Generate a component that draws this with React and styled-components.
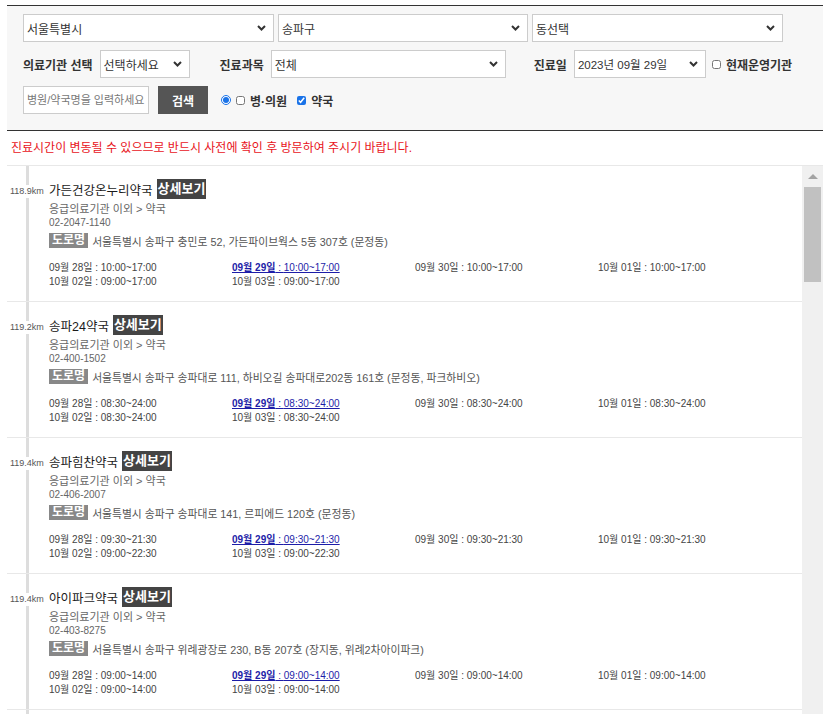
import styled, { createGlobalStyle } from 'styled-components'

const GlobalStyle = createGlobalStyle`
  html, body {
    margin: 0;
    padding: 0;
    background: #fff;
    overflow: hidden;
  }
  body {
    font-family: "Liberation Sans", "Noto Sans CJK KR", sans-serif;
    color: #333;
  }
  * { box-sizing: border-box; }
`

const DATES = ['09월 28일', '09월 29일', '09월 30일', '10월 01일', '10월 02일', '10월 03일']
const TODAY = 1

const PHARMACIES = [
  {
    id: 1,
    dist: '118.9km',
    name: '가든건강온누리약국',
    tel: '02-2047-1140',
    addr: '서울특별시 송파구 충민로 52, 가든파이브웍스 5동 307호 (문정동)',
    times: ['10:00~17:00', '10:00~17:00', '10:00~17:00', '10:00~17:00', '09:00~17:00', '09:00~17:00'],
  },
  {
    id: 2,
    dist: '119.2km',
    name: '송파24약국',
    tel: '02-400-1502',
    addr: '서울특별시 송파구 송파대로 111, 하비오길 송파대로202동 161호 (문정동, 파크하비오)',
    times: ['08:30~24:00', '08:30~24:00', '08:30~24:00', '08:30~24:00', '08:30~24:00', '08:30~24:00'],
  },
  {
    id: 3,
    dist: '119.4km',
    name: '송파힘찬약국',
    tel: '02-406-2007',
    addr: '서울특별시 송파구 송파대로 141, 르피에드 120호 (문정동)',
    times: ['09:30~21:30', '09:30~21:30', '09:30~21:30', '09:30~21:30', '09:00~22:30', '09:00~22:30'],
  },
  {
    id: 4,
    dist: '119.4km',
    name: '아이파크약국',
    tel: '02-403-8275',
    addr: '서울특별시 송파구 위례광장로 230, B동 207호 (장지동, 위례2차아이파크)',
    times: ['09:00~14:00', '09:00~14:00', '09:00~14:00', '09:00~14:00', '09:00~14:00', '09:00~14:00'],
  },
]

function Chevron() {
  return (
    <svg width="9" height="6" viewBox="0 0 9 6">
      <path d="M1 1 L4.5 4.5 L8 1" fill="none" stroke="#333" strokeWidth="2" />
    </svg>
  )
}

function Select({ width, value, small }) {
  return (
    <SelectBox $width={width} $small={small}>
      <span>{value}</span>
      <Chevron />
    </SelectBox>
  )
}

function App() {
  return (
    <Page>
      <GlobalStyle />
      <FilterBox>
        <FilterRow $gap={4}>
          <Select width={251} value="서울특별시" />
          <Select width={250} value="송파구" />
          <Select width={251} value="동선택" />
        </FilterRow>
        <FilterRow>
          <Label>의료기관 선택</Label>
          <Select width={90} value="선택하세요" />
          <Label $space={23}>진료과목</Label>
          <Select width={235} value="전체" />
          <Label $space={21}>진료일</Label>
          <Select width={132} value="2023년 09월 29일" small />
          <CheckGroup>
            <Check type="checkbox" readOnly />
            <Label>현재운영기관</Label>
          </CheckGroup>
        </FilterRow>
        <FilterRow>
          <SearchInput placeholder="병원/약국명을 입력하세요" />
          <SearchButton>검색</SearchButton>
          <CheckGroup $space={6}>
            <Radio type="radio" checked readOnly />
            <Check type="checkbox" readOnly />
            <Label>병·의원</Label>
            <Check type="checkbox" checked readOnly $space={5} />
            <Label>약국</Label>
          </CheckGroup>
        </FilterRow>
      </FilterBox>

      <Notice>진료시간이 변동될 수 있으므로 반드시 사전에 확인 후 방문하여 주시기 바랍니다.</Notice>

      <ResultList>
        <Timeline>
          {PHARMACIES.map((p) => (
            <Item key={p.id}>
              <Distance>
                <span>{p.dist}</span>
              </Distance>
              <Info>
                <TitleRow>
                  <Name>{p.name}</Name>
                  <DetailBadge>상세보기</DetailBadge>
                </TitleRow>
                <Category>응급의료기관 이외 &gt; 약국</Category>
                <Phone>{p.tel}</Phone>
                <AddressRow>
                  <RoadBadge>도로명</RoadBadge>
                  <Address>{p.addr}</Address>
                </AddressRow>
                <Schedule>
                  {DATES.map((d, i) => (
                    <TimeCell key={d} $today={i === TODAY}>
                      <b>{d}</b> : {p.times[i]}
                    </TimeCell>
                  ))}
                </Schedule>
              </Info>
            </Item>
          ))}
          <Item />
        </Timeline>
        <ScrollTrack>
          <ScrollArrow />
          <ScrollThumb />
        </ScrollTrack>
      </ResultList>
    </Page>
  )
}

const Page = styled.div`
  padding: 5px 7px 0;
`

const FilterBox = styled.div`
  display: flex;
  flex-direction: column;
  gap: 8px;
  background: #f7f7f7;
  border-top: 1px solid #333;
  border-bottom: 1px solid #333;
  padding: 8px 16px 16px;
`

const FilterRow = styled.div`
  display: flex;
  align-items: center;
  gap: ${({ $gap }) => $gap || 7}px;
  height: 28px;
`

const SelectBox = styled.div`
  width: ${({ $width }) => $width}px;
  height: 28px;
  flex: none;
  display: flex;
  align-items: center;
  justify-content: space-between;
  padding: 0 7px 0 3px;
  background: #fff;
  border: 1px solid #ccc;
  font-size: ${({ $small }) => ($small ? 11.5 : 12)}px;
  color: #333;
  white-space: nowrap;
  overflow: hidden;

  svg { flex: none; }
`

const Label = styled.label`
  margin-left: ${({ $space }) => $space || 0}px;
  font-size: 12px;
  font-weight: bold;
  color: #333;
  white-space: nowrap;
`

const CheckGroup = styled.div`
  display: flex;
  align-items: center;
  gap: 5px;
  margin-left: ${({ $space }) => $space || -1}px;
`

const Check = styled.input`
  width: 9px;
  height: 9px;
  margin: 0 0 0 ${({ $space }) => $space || 0}px;
  accent-color: #1a73e8;
`

const Radio = styled.input`
  width: 10px;
  height: 10px;
  margin: 0;
  accent-color: #1a73e8;
`

const SearchInput = styled.input`
  width: 126px;
  height: 28px;
  padding: 0 3px;
  border: 1px solid #ccc;
  background: #fff;
  font-family: inherit;
  font-size: 11px;
  color: #333;
  outline: none;

  &::placeholder { color: #777; }
`

const SearchButton = styled.button`
  width: 50px;
  height: 28px;
  margin-left: 2px;
  border: none;
  background: #555;
  color: #fff;
  font-family: inherit;
  font-size: 12px;
  font-weight: bold;
`

const Notice = styled.p`
  margin: 0;
  height: 35px;
  line-height: 34px;
  padding-left: 4px;
  font-size: 12px;
  color: #e8131b;
  border-bottom: 1px solid #e8e8e8;
`

const ResultList = styled.div`
  display: flex;
  height: 548px;
  overflow: hidden;
`

const Timeline = styled.div`
  flex: 1;
  min-width: 0;
  background: linear-gradient(#ddd, #ddd) no-repeat 19px 0 / 3px 100%;
`

const ScrollTrack = styled.div`
  width: 21px;
  flex: none;
  display: flex;
  flex-direction: column;
  align-items: center;
  background: #f0f0f0;
`

const ScrollArrow = styled.div`
  height: 21px;
  width: 100%;
  display: flex;
  align-items: center;
  justify-content: center;

  &::before {
    content: '';
    border-left: 5px solid transparent;
    border-right: 5px solid transparent;
    border-bottom: 5px solid #a3a3a3;
  }
`

const ScrollThumb = styled.div`
  width: 17px;
  height: 95px;
  background: #c1c1c1;
`

const Item = styled.div`
  display: flex;
  padding: 13px 0 12px 3px;
  border-bottom: 1px solid #e8e8e8;
`

const Distance = styled.div`
  width: 38px;
  flex: none;
  padding-top: 1px;

  span {
    display: inline-block;
    background: #fff;
    font-size: 9px;
    line-height: 13px;
    color: #555;
  }
`

const Info = styled.div`
  flex: 1;
  display: flex;
  flex-direction: column;
  padding-left: 1px;
`

const TitleRow = styled.div`
  display: flex;
  align-items: center;
  gap: 4px;
  height: 20px;
`

const Name = styled.span`
  font-size: 12.5px;
  color: #1a1a1a;
`

const DetailBadge = styled.span`
  background: #444;
  color: #fff;
  font-size: 13px;
  font-weight: bold;
  line-height: 20px;
  padding: 0 1px;
`

const Category = styled.div`
  margin-top: 3px;
  font-size: 11px;
  line-height: 14px;
  color: #666;
`

const Phone = styled.div`
  font-size: 10px;
  line-height: 14px;
  color: #666;
`

const AddressRow = styled.div`
  display: flex;
  align-items: center;
  gap: 4px;
  margin-top: 3px;
  height: 15px;
`

const RoadBadge = styled.span`
  background: #888;
  color: #fff;
  font-size: 12px;
  font-weight: bold;
  line-height: 15px;
  padding: 0 3px;
`

const Address = styled.span`
  font-size: 10.8px;
  color: #555;
  white-space: nowrap;
`

const Schedule = styled.div`
  display: grid;
  grid-template-columns: repeat(4, 183px);
  margin-top: 13px;
`

const TimeCell = styled.div`
  font-size: 10px;
  line-height: 14px;
  white-space: nowrap;
  color: ${({ $today }) => ($today ? '#1d1da8' : '#444')};
  text-decoration: ${({ $today }) => ($today ? 'underline' : 'none')};

  b {
    font-weight: ${({ $today }) => ($today ? 'bold' : 'normal')};
  }
`

export default App
